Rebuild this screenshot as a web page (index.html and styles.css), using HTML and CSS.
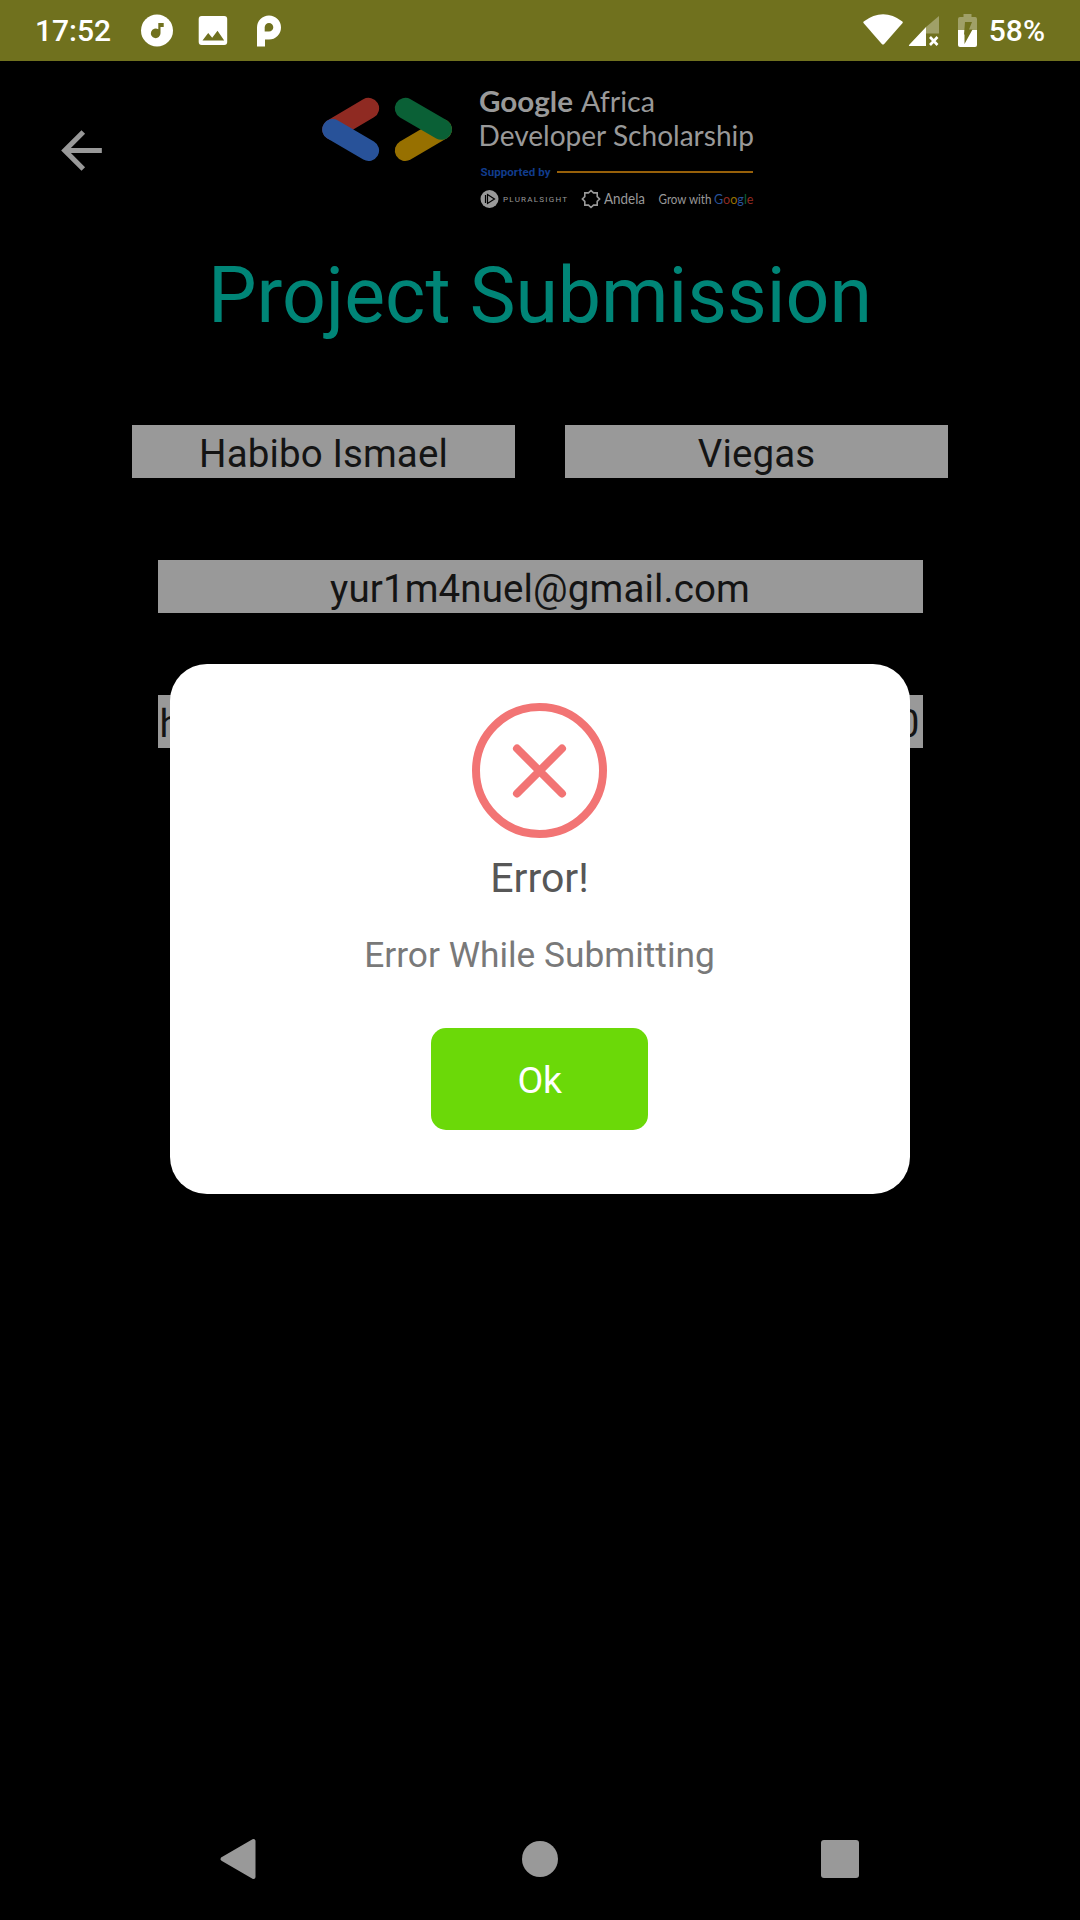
FILE: index.html
```html
<!DOCTYPE html>
<html lang="en">
<head>
<meta charset="utf-8">
<title>Project Submission</title>
<link rel="stylesheet" href="styles.css">
</head>
<body>
<div class="screen">
  <header class="status">
    <span class="clock">17:52</span>
    <svg class="status-left" width="145" height="61" viewBox="137 0 145 61">
      <circle cx="157" cy="30.500" r="16" fill="#fff"/>
      <path d="M158.300 23h5.400v4h-3.200v6.300a4.800 4.800 0 1 1-2.200-4z" fill="#70711e"/>
      <rect x="198.700" y="16" width="28.500" height="29" rx="3" fill="#fff"/>
      <path d="M202.500 40.500l5.700-7.500 4 4.800 5.300-7 6.700 9.700z" fill="#70711e"/>
      <path fill-rule="evenodd" d="M257 46.500V27.500a12 12 0 1 1 12 12H265v7zM269 23a4.300 4.300 0 0 0-4.300 4.300V31.600H269a4.300 4.300 0 0 0 0-8.600z" fill="#fff"/>
    </svg>
    <svg class="status-right" width="120" height="61" viewBox="860 0 120 61">
      <path d="M863.700 21.500q19.500-14.500 38.700 0 .8.700.2 1.400L884.200 44q-1.200 1.200-2.400 0L863.500 22.900q-.6-.7.200-1.400z" fill="#fff"/>
      <path d="M926 27l13-11v17.500h-13z" fill="#a0a068"/>
      <path d="M909.500 44.500L926 27v19h-16q-2 0-.5-1.500z" fill="#fff"/>
      <path d="M930 37l7.500 8M937.500 37l-7.500 8" stroke="#fff" stroke-width="2.600"/>
      <path d="M960 17h3.500v-3h8v3h3.700q1.800 0 1.800 2v11h-19V19q0-2 2-2z" fill="#a0a068"/>
      <path d="M958 30h19v15q0 2-2 2h-15q-2 0-2-2z" fill="#fff"/>
      <path d="M965 22h7l-3 7.500h3.500L964.500 44v-9.500H964z" fill="#70711e"/>
    </svg>
    <span class="battery">58%</span>
  </header>

  <main class="page">
    <div class="toolbar">
      <svg class="back" width="61" height="61" viewBox="0 0 24 24"><path d="M20 11H7.830l5.590-5.590L12 4l-8 8 8 8 1.410-1.410L7.830 13H20z" fill="#999"/></svg>
      <svg class="logo" width="440" height="140" viewBox="320 75 440 140">
        <g stroke-width="21" stroke-linecap="round">
          <path d="M368.600 108.300L332.700 129.500" stroke="#8f2a22"/>
          <path d="M332.700 129.500L368.600 150.500" stroke="#285299"/>
          <path d="M405.300 150.500L441.500 129.300" stroke="#977000"/>
          <path d="M405.300 108.300L441.500 129.300" stroke="#0a6036"/>
        </g>
        <g class="logo-text">
          <text x="479" y="111.500" font-size="28" font-weight="700" textLength="94" lengthAdjust="spacingAndGlyphs">Google</text>
          <text x="581" y="111.500" font-size="28.500" textLength="74" lengthAdjust="spacingAndGlyphs">Africa</text>
          <text x="478.500" y="146" font-size="28.500" textLength="275.500" lengthAdjust="spacingAndGlyphs">Developer Scholarship</text>
          <text class="supported" x="480.500" y="175.500" font-size="11.500" textLength="70">Supported by</text>
          <text class="pluralsight" x="503" y="202" font-size="8" textLength="64">PLURALSIGHT</text>
          <text x="604" y="204" font-size="14.500" textLength="41" lengthAdjust="spacingAndGlyphs">Andela</text>
          <text x="658.500" y="203.500" font-size="12.500" textLength="53" lengthAdjust="spacingAndGlyphs">Grow with</text>
          <text x="714" y="203.500" font-size="13" textLength="39.500" lengthAdjust="spacingAndGlyphs"><tspan fill="#285299">G</tspan><tspan fill="#8f2a22">o</tspan><tspan fill="#977000">o</tspan><tspan fill="#285299">g</tspan><tspan fill="#0a6036">l</tspan><tspan fill="#8f2a22">e</tspan></text>
        </g>
        <path d="M557 172h196" stroke="#976009" stroke-width="2"/>
        <circle cx="489.500" cy="199" r="9" fill="#999"/>
        <path d="M487.500 194.500l7 4.500-7 4.500zM485.500 195v8" fill="none" stroke="#000" stroke-width="1.200"/>
        <path d="M591 190.500l2.500 2.400h3.700v3.700l2.400 2.400-2.400 2.400v3.700h-3.700l-2.500 2.400-2.500-2.400h-3.700v-3.700l-2.400-2.400 2.400-2.400v-3.700h3.700z" fill="none" stroke="#999" stroke-width="1.600"/>
      </svg>
    </div>
    <h1 class="title">Project Submission</h1>
    <form class="form">
      <div class="names">
        <div class="field">Habibo Ismael</div>
        <div class="field">Viegas</div>
      </div>
      <div class="field wide">yur1m4nuel@gmail.com</div>
      <div class="field wide link"><span>h</span><span>0</span></div>
    </form>
  </main>

  <section class="dialog">
    <svg width="135" height="135" viewBox="0 0 135 135" fill="none" stroke="#f27474" stroke-width="8">
      <circle cx="67.500" cy="67.500" r="63.500"/>
      <path d="M45 45.500l45 45M90 45.500L45 90.500" stroke-linecap="round"/>
    </svg>
    <h2 class="dialog-title">Error!</h2>
    <p class="dialog-text">Error While Submitting</p>
    <button class="ok">Ok</button>
  </section>

  <nav class="nav">
    <svg width="40" height="44" viewBox="0 0 40 44"><path d="M3.500 22L34.500 4v36z" fill="#999" stroke="#999" stroke-width="4" stroke-linejoin="round"/></svg>
    <svg width="36" height="36" viewBox="0 0 36 36"><circle cx="18" cy="18" r="18" fill="#999"/></svg>
    <svg width="38" height="38" viewBox="0 0 38 38"><rect width="38" height="38" rx="3" fill="#999"/></svg>
  </nav>
</div>
</body>
</html>
```

FILE: styles.css
```css
* { box-sizing: border-box; }
body { margin: 0; background: #000; font-family: Roboto, sans-serif; }
.screen { position: relative; display: flex; flex-direction: column; width: 1080px; height: 1920px; overflow: hidden; background: #000; }
.status { display: flex; align-items: center; height: 61px; padding: 0 35px; background: #70711e; color: #fff; font-size: 30px; font-weight: 500; line-height: 61px; }
.status svg { display: block; flex: none; }
.clock { width: 102px; }
.status-right { margin-left: auto; }
.battery { width: 65px; white-space: nowrap; text-align: right; }
.page { flex: 1; }
.toolbar { display: flex; padding: 14px 0 0 51px; }
.toolbar svg { display: block; }
.back { margin-top: 45px; }
.logo { margin-left: 208px; }
.logo-text { font-family: Lato, sans-serif; fill: #999; }
.supported { font-family: Roboto, sans-serif; font-weight: 700; fill: #113c8c; }
.pluralsight { font-family: Roboto, sans-serif; }
.title { height: 90px; margin: 36px 0 0; color: #008577; font-size: 77px; font-weight: 400; line-height: 90px; text-align: center; }
.form { display: flex; flex-direction: column; align-items: center; gap: 82px; margin-top: 84px; }
.names { display: flex; gap: 50px; }
.field { width: 383px; height: 53px; background: #999; color: #141414; font-size: 38.500px; letter-spacing: 0.120px; line-height: 57px; text-align: center; white-space: nowrap; }
.wide { width: 765px; }
.link { display: flex; justify-content: space-between; padding: 0 3px 0 2px; }
.dialog { position: absolute; left: 170px; top: 664px; display: flex; flex-direction: column; align-items: center; width: 740px; height: 530px; padding: 39px 1px 0 0; border-radius: 37px; background: #fff; }
.dialog svg { display: block; }
.dialog-title { margin: 16px 0 0; color: #575757; font-size: 41px; font-weight: 400; line-height: 48px; }
.dialog-text { margin: 32px 0 0; color: #797979; font-size: 35.300px; line-height: 42px; }
.ok { width: 217px; height: 102px; margin: 52px 0 0; padding: 2px 0 0; border: 0; border-radius: 15px; background: #6bd908; color: #fff; font-family: inherit; font-size: 37.500px; letter-spacing: -0.500px; }
.nav { display: flex; align-items: center; justify-content: space-between; height: 122px; padding: 0 221px 0 219px; }
```
